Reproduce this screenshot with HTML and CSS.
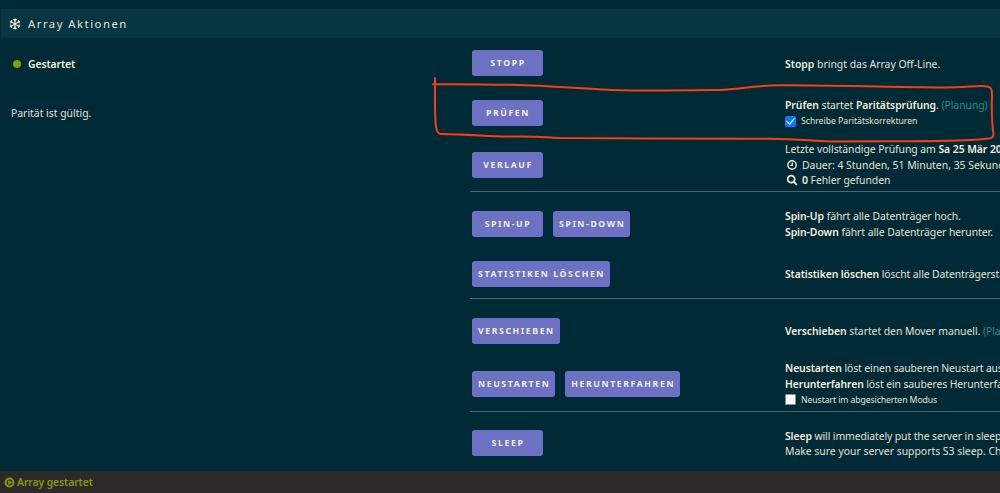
FILE: index.html
```
<!DOCTYPE html>
<html lang="de">
<head>
    <meta charset="UTF-8">
    <meta name="viewport" content="width=device-width, initial-scale=1.0">
    <title>Array Aktionen</title>
    <link rel="stylesheet" href="styles.css">
</head>
<body>
    <div class="title">
        <svg class="snow" viewBox="0 0 12 12"><path d="M6 .5v11M1.2 3.2l9.6 5.6M10.8 3.2L1.2 8.8M4.4 1.2L6 2.7l1.6-1.5M4.4 10.8L6 9.3l1.6 1.5M.8 5l2.1-.6-.5-2.2M11.2 7l-2.1.6.5 2.2M11.2 5l-2.1-.6.5-2.2M.8 7l2.1.6-.5 2.2"/></svg>
        <span>Array Aktionen</span>
    </div>

    <div class="content">
        <div class="status">
            <div class="state"><span class="dot"></span><b>Gestartet</b></div>
            <div class="parity">Parität ist gültig.</div>
        </div>

        <div class="actions">
            <div class="group">
                <div class="row stop">
                    <div class="buttons"><button>Stopp</button></div>
                    <div class="info"><p class="wide"><b>Stopp</b> bringt das Array Off-Line.</p></div>
                </div>
                <div class="row check">
                    <div class="buttons"><button>Prüfen</button></div>
                    <div class="info">
                        <p><b>Prüfen</b> startet <b>Paritätsprüfung</b>. <a>(Planung)</a></p>
                        <label><input type="checkbox" checked>Schreibe Paritätskorrekturen</label>
                    </div>
                </div>
                <div class="row history">
                    <div class="buttons"><button>Verlauf</button></div>
                    <div class="info">
                        <p class="last">Letzte vollständige Prüfung am <b>Sa 25 Mär 2023</b></p>
                        <p class="wide"><svg class="icon" viewBox="0 0 12 12"><circle cx="6" cy="6" r="4.2"/><path d="M6.3 3.4v3H4.2"/></svg>Dauer: 4 Stunden, 51 Minuten, 35 Sekunden</p>
                        <p><svg class="icon find" viewBox="0 0 12 12"><circle cx="5.2" cy="5.2" r="3.5"/><path d="M7.8 7.8l3 3"/></svg><b>0</b> Fehler gefunden</p>
                    </div>
                </div>
            </div>

            <div class="group">
                <div class="row spin">
                    <div class="buttons"><button>Spin-Up</button><button>Spin-Down</button></div>
                    <div class="info">
                        <p><b>Spin-Up</b> fährt alle Datenträger hoch.</p>
                        <p><b>Spin-Down</b> fährt alle Datenträger herunter.</p>
                    </div>
                </div>
                <div class="row stats">
                    <div class="buttons"><button>Statistiken löschen</button></div>
                    <div class="info"><p class="narrow"><b>Statistiken löschen</b> löscht alle Datenträgerstatistiken.</p></div>
                </div>
            </div>

            <div class="group">
                <div class="row move">
                    <div class="buttons"><button>Verschieben</button></div>
                    <div class="info"><p><b>Verschieben</b> startet den Mover manuell. <a>(Planung)</a></p></div>
                </div>
                <div class="row reboot">
                    <div class="buttons"><button>Neustarten</button><button>Herunterfahren</button></div>
                    <div class="info">
                        <p class="narrow"><b>Neustarten</b> löst einen sauberen Neustart aus.</p>
                        <p class="narrow"><b>Herunterfahren</b> löst ein sauberes Herunterfahren aus.</p>
                        <label class="safe"><input type="checkbox">Neustart im abgesicherten Modus</label>
                    </div>
                </div>
            </div>

            <div class="group">
                <div class="row sleep">
                    <div class="buttons"><button>Sleep</button></div>
                    <div class="info">
                        <p class="narrow"><b>Sleep</b> will immediately put the server in sleep mode.</p>
                        <p class="wide">Make sure your server supports S3 sleep. Check this first.</p>
                    </div>
                </div>
            </div>
        </div>
    </div>

    <div class="footer">
        <svg class="play" viewBox="0 0 10 10"><circle cx="5" cy="5" r="3.6"/><path d="M3.8 2.7v4.6L7.6 5z"/></svg>
        <b>Array gestartet</b>
    </div>

    <!-- hand drawn marker around the parity check -->
    <svg class="marker" viewBox="0 0 1000 493">
        <path d="M433 84.2C470 84 505 84.5 530 85.5C565 86.5 590 89.5 620 90.3C655 90.9 690 90.3 720 89.9C740 89.5 750 85.7 780 85.3C830 85 890 87.5 945 87.5C965 87.5 975 85.5 985 86.2C992 86.5 992 90 992 96C991.5 111 992 124 993.5 134C994 139 989 138.5 984 139C960 142 895 141 830 141.5C810 141 800 138.7 770 138.7C700 139 630 138 560 138C545 137.5 540 136.5 520 136.6C490 136.7 475 134.5 441 134C435 134 435.5 122 435 108V78"/>
    </svg>
</body>
</html>
```

FILE: styles.css
```
* {
    box-sizing: border-box;
}

body {
    margin: 0;
    padding-top: 9px;
    height: 493px;
    overflow: hidden;
    background: #002b36;
    color: #e5e1d0;
    font-family: "Noto Sans", sans-serif;
    font-size: 10.4px;
    line-height: 16px;
}

.title {
    display: flex;
    align-items: center;
    height: 29px;
    margin-left: 1px;
    padding-left: 8px;
    background: #073642;
    font-size: 11.3px;
    letter-spacing: 1.5px;
}

.snow {
    width: 12px;
    height: 12px;
    margin-right: 7px;
    fill: none;
    stroke: #eee8d5;
    stroke-width: 1.2;
}

b {
    font-weight: 600;
    color: #f5efdc;
}

a {
    color: #238e88;
}

.content {
    display: flex;
    height: 433px;
}

.status {
    width: 470px;
    padding: 18px 0 0 11px;
    flex-shrink: 0;
}

.state {
    display: flex;
    align-items: center;
    letter-spacing: -0.1px;
}

.dot {
    width: 8px;
    height: 8px;
    margin: 0 7px 0 2px;
    border-radius: 50%;
    background: #859900;
}

.parity {
    margin-top: 33px;
}

.actions {
    width: 530px;
    overflow: hidden;
}

.group + .group {
    border-top: 1px solid #456871;
    padding-top: 6px;
}

.group:nth-child(3) {
    padding-top: 7px;
}

.group:nth-child(4) {
    padding-top: 3px;
}

.row {
    display: flex;
    align-items: center;
    height: 50px;
}

.history {
    height: 53px;
}

.spin {
    height: 51px;
}

.stats {
    height: 49px;
}

.reboot {
    height: 55px;
}

.sleep {
    height: 56px;
}

.buttons {
    display: flex;
    gap: 10px;
    width: 315px;
    padding-left: 2px;
    flex-shrink: 0;
}

button {
    min-width: 71px;
    height: 26px;
    padding: 0 5px 0 6px;
    border: none;
    border-radius: 3px;
    background: #6c71c4;
    color: #f3eddd;
    font-family: inherit;
    font-size: 8.7px;
    font-weight: 700;
    letter-spacing: 1.6px;
    text-transform: uppercase;
    white-space: nowrap;
}

.info {
    white-space: nowrap;
}

p {
    margin: 0;
    letter-spacing: -0.05px;
}

.wide {
    letter-spacing: 0;
}

.narrow {
    letter-spacing: -0.1px;
}

.stop .info {
    padding-top: 1px;
}

.history p,
.sleep p {
    line-height: 15.5px;
}

.history .info,
.sleep .info {
    padding-top: 2px;
}

label {
    display: flex;
    align-items: center;
    height: 16px;
    font-size: 8.7px;
    letter-spacing: -0.03px;
}

.safe {
    letter-spacing: -0.1px;
}

input {
    appearance: none;
    width: 11px;
    height: 11px;
    margin: 0 5px 0 0;
    border: 1px solid #8b8994;
    border-radius: 1px;
    background: #fff;
}

input:checked {
    border: none;
    border-radius: 2px;
    background: #0a7aff;
    display: grid;
    place-items: center;
}

input:checked::before {
    content: "";
    width: 4px;
    height: 7px;
    margin-top: -2px;
    border: solid #fff;
    border-width: 0 1.5px 1.5px 0;
    transform: rotate(40deg);
}

.icon {
    width: 12px;
    height: 12px;
    margin: 0 4px 0 1px;
    vertical-align: -2px;
    fill: none;
    stroke: #eee8d5;
    stroke-width: 1.4;
}

.find {
    stroke-width: 1.8;
}

.footer {
    display: flex;
    align-items: center;
    height: 22px;
    padding-left: 4px;
    background: #2b2a29;
}

.footer b {
    color: #859900;
    letter-spacing: -0.1px;
}

.play {
    width: 11px;
    height: 11px;
    margin-right: 2px;
    fill: none;
    stroke: #859900;
    stroke-width: 1.8;
}

.play path {
    fill: #859900;
    stroke: none;
}

.marker {
    position: absolute;
    top: 0;
    left: 0;
    width: 1000px;
    height: 493px;
    fill: none;
    stroke: #fc3d12;
    stroke-width: 2;
    stroke-linecap: round;
    stroke-linejoin: round;
    pointer-events: none;
}
```
